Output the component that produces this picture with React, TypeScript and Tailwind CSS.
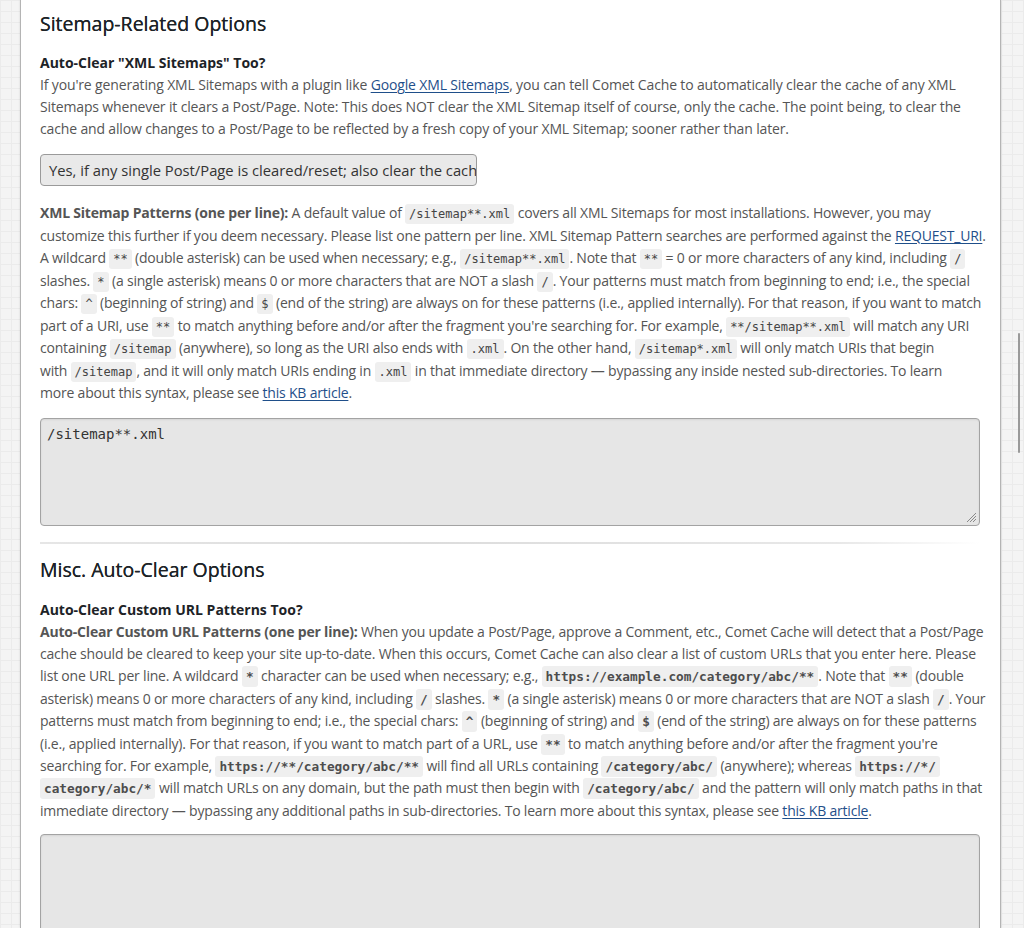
import React from "react";

const body = "font-['Open_Sans',sans-serif]";

function Code({ children, big }: { children: React.ReactNode; big?: boolean }) {
  return big ? (
    <code className="font-['DejaVu_Sans_Mono',monospace] text-[12.75px] leading-none font-bold text-[#4d4d4d] bg-[#efefef] px-[4px] py-[3px] rounded-[3px] tracking-normal">
      {children}
    </code>
  ) : (
    <code className="font-['DejaVu_Sans_Mono',monospace] text-[12px] leading-none text-[#444] bg-[#efefef] px-[4px] py-[3px] rounded-[3px] tracking-normal">
      {children}
    </code>
  );
}

function A({ children }: { children: React.ReactNode }) {
  return <a className="text-[#1f4f8a] underline underline-offset-2 decoration-1">{children}</a>;
}

function Heading({ children }: { children: React.ReactNode }) {
  return (
    <h3 className="text-[19.5px] leading-[28px] text-[#1d2327] font-normal [text-shadow:0_0_0.5px_#1d2327]">
      {children}
    </h3>
  );
}

function Sub({ children }: { children: React.ReactNode }) {
  return <h4 className="text-[14px] leading-[22px] font-bold text-[#1d2327]">{children}</h4>;
}

function Grip() {
  return (
    <svg className="absolute right-[2px] bottom-[2px]" width="12" height="12" viewBox="0 0 12 12">
      <g stroke="#8a8a8a" strokeWidth="1">
        <line x1="11" y1="2" x2="2" y2="11" />
        <line x1="11" y1="5" x2="5" y2="11" />
        <line x1="11" y1="8" x2="8" y2="11" />
      </g>
    </svg>
  );
}

function PatternBox({ value }: { value: string }) {
  return (
    <div className="relative h-[108px] rounded-[4px] border border-[#a3a3a3] bg-[#e6e6e6] shadow-[inset_0_1px_2px_rgba(0,0,0,0.08)] px-[6px] py-[4px]">
      <div className="font-['DejaVu_Sans_Mono',monospace] text-[14px] leading-[22px] text-[#333]">{value}</div>
      <Grip />
    </div>
  );
}

export default function App() {
  return (
    <div className="relative h-[928px] overflow-hidden bg-[#f4f4f4] bg-[linear-gradient(#ebebeb_1px,transparent_1px),linear-gradient(90deg,#ebebeb_1px,transparent_1px)] bg-[size:11px_11px] pl-[20px] pr-[23px]">
      <div className={`${body} h-full bg-white border-l border-r border-[#b4b4b4] shadow-[0_0_2px_rgba(0,0,0,0.12)] pl-[19px] pr-[20px] pt-[10px] text-[#555]`}>
        {/* Sitemap section */}
        <Heading>Sitemap-Related Options</Heading>
        <div className="mt-[14px]">
          <Sub>Auto-Clear "XML Sitemaps" Too?</Sub>
          <p className="text-[14px] leading-[22px] tracking-[-0.15px] whitespace-nowrap">
            If you're generating XML Sitemaps with a plugin like <A>Google XML Sitemaps</A>, you can tell Comet Cache to automatically clear the cache of any XML
            <br />
            Sitemaps whenever it clears a Post/Page. Note: This does NOT clear the XML Sitemap itself of course, only the cache. The point being, to clear the
            <br />
            cache and allow changes to a Post/Page to be reflected by a fresh copy of your XML Sitemap; sooner rather than later.
          </p>
        </div>
        <div className="mt-[14px] w-[437px] h-[32px] rounded-[4px] border border-[#9a9a9a] bg-[#e9e9e9] pl-[8px] flex items-center overflow-hidden whitespace-nowrap text-[14.75px] text-[#333]">
          Yes, if any single Post/Page is cleared/reset; also clear the cache of any XML Sitemaps.
        </div>
        <p className="mt-[16px] text-[14px] leading-[22.5px] tracking-[-0.2px] whitespace-nowrap">
          <strong className="font-bold">XML Sitemap Patterns (one per line):</strong> A default value of <Code>/sitemap**.xml</Code> covers all XML Sitemaps for most installations. However, you may
          <br />
          customize this further if you deem necessary. Please list one pattern per line. XML Sitemap Pattern searches are performed against the <A>REQUEST_URI</A>.
          <br />
          A wildcard <Code>**</Code> (double asterisk) can be used when necessary; e.g., <Code>/sitemap**.xml</Code>. Note that <Code>**</Code> = 0 or more characters of any kind, including <Code>/</Code>
          <br />
          slashes. <Code>*</Code> (a single asterisk) means 0 or more characters that are NOT a slash <Code>/</Code>. Your patterns must match from beginning to end; i.e., the special
          <br />
          chars: <Code>^</Code> (beginning of string) and <Code>$</Code> (end of the string) are always on for these patterns (i.e., applied internally). For that reason, if you want to match
          <br />
          part of a URI, use <Code>**</Code> to match anything before and/or after the fragment you're searching for. For example, <Code>**/sitemap**.xml</Code> will match any URI
          <br />
          containing <Code>/sitemap</Code> (anywhere), so long as the URI also ends with <Code>.xml</Code>. On the other hand, <Code>/sitemap*.xml</Code> will only match URIs that begin
          <br />
          with <Code>/sitemap</Code>, and it will only match URIs ending in <Code>.xml</Code> in that immediate directory — bypassing any inside nested sub-directories. To learn
          <br />
          more about this syntax, please see <A>this KB article</A>.
        </p>
        <div className="mt-[13px]">
          <PatternBox value="/sitemap**.xml" />
        </div>

        <div className="mt-[16px] h-[2px] bg-[linear-gradient(90deg,#e6e6e6,#dcdcdc_40%,#e8e8e8_85%,transparent)]" />

        {/* Misc section */}
        <div className="mt-[12px]">
          <Heading>Misc. Auto-Clear Options</Heading>
        </div>
        <div className="mt-[15px]">
          <Sub>Auto-Clear Custom URL Patterns Too?</Sub>
          <p className="text-[14px] leading-[22.4px] tracking-[-0.2px] whitespace-nowrap">
            <strong className="font-bold">Auto-Clear Custom URL Patterns (one per line):</strong> When you update a Post/Page, approve a Comment, etc., Comet Cache will detect that a Post/Page
            <br />
            cache should be cleared to keep your site up-to-date. When this occurs, Comet Cache can also clear a list of custom URLs that you enter here. Please
            <br />
            list one URL per line. A wildcard <Code big>*</Code> character can be used when necessary; e.g., <Code big>https://example.com/category/abc/**</Code>. Note that <Code big>**</Code> (double
            <br />
            asterisk) means 0 or more characters of any kind, including <Code big>/</Code> slashes. <Code big>*</Code> (a single asterisk) means 0 or more characters that are NOT a slash <Code big>/</Code>. Your
            <br />
            patterns must match from beginning to end; i.e., the special chars: <Code big>^</Code> (beginning of string) and <Code big>$</Code> (end of the string) are always on for these patterns
            <br />
            (i.e., applied internally). For that reason, if you want to match part of a URL, use <Code big>**</Code> to match anything before and/or after the fragment you're
            <br />
            searching for. For example, <Code big>https://**/category/abc/**</Code> will find all URLs containing <Code big>/category/abc/</Code> (anywhere); whereas <Code big>https://*/</Code>
            <br />
            <Code big>category/abc/*</Code> will match URLs on any domain, but the path must then begin with <Code big>/category/abc/</Code> and the pattern will only match paths in that
            <br />
            immediate directory — bypassing any additional paths in sub-directories. To learn more about this syntax, please see <A>this KB article</A>.
          </p>
        </div>
        <div className="mt-[12px]">
          <PatternBox value="" />
        </div>
      </div>

      {/* scrollbar thumb */}
      <div className="absolute right-[4px] top-[333px] h-[120px] w-[2px] rounded-full bg-[#9a9a9a]" />
    </div>
  );
}
